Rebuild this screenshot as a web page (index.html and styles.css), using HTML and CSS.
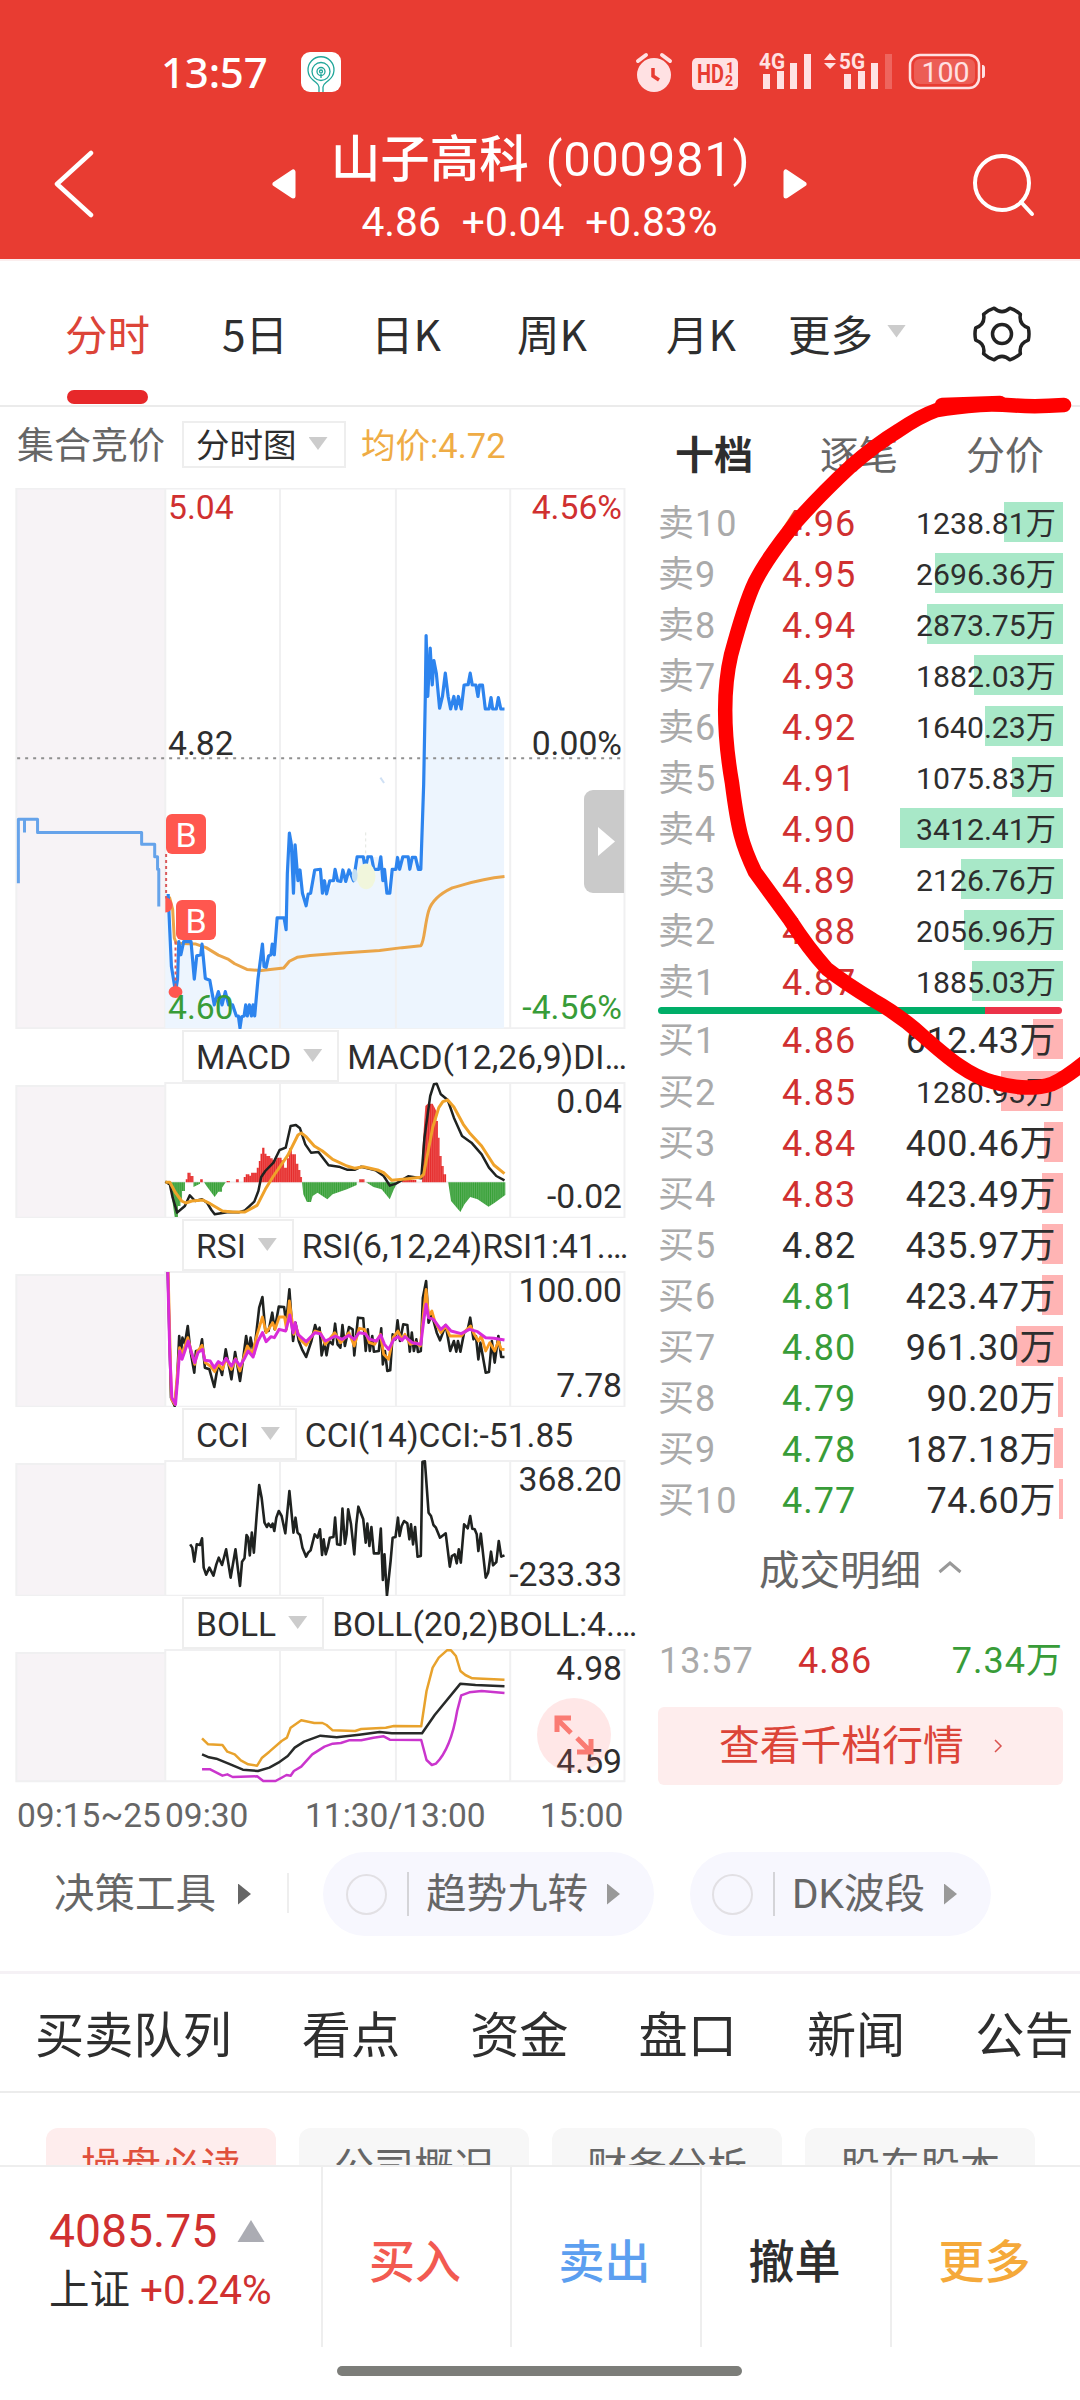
FILE: index.html
```html
<!DOCTYPE html>
<html lang="zh-CN">
<head>
<meta charset="utf-8">
<title>山子高科 (000981)</title>
<link rel="stylesheet" href="styles.css">
</head>
<body>
<div class="screen">
  <header class="header">
    <div class="status">
      <span class="clock">13:57</span>
      <svg class="app-icon" viewBox="0 0 40 40"><rect width="40" height="40" rx="9" fill="#fff"/><g fill="none" stroke="#20a69a" stroke-width="1.3"><path d="M18 40v-5c0-3-3-4-6-7A13 13 0 1 1 28 28c-3 3-6 4-6 7v5"/><circle cx="20" cy="19.500" r="9"/><circle cx="20" cy="19.500" r="4"/><circle cx="20" cy="19.500" r="1.500"/><path d="M20 22v4"/></g></svg>
      <svg class="status-icons" viewBox="0 0 370 64" fill="#ffe1e3">
        <circle cx="29" cy="35" r="17"/><path d="M13 21l8-6M45 21l-8-6" stroke="#ffe1e3" stroke-width="4" stroke-linecap="round"/><path d="M28 28v8l6 4" fill="none" stroke="#e83c32" stroke-width="3.500"/>
        <rect x="67" y="18" width="46" height="32" rx="5"/>
        <g class="st-bold"><text x="72" y="43" font-size="25" fill="#e83c32" textLength="27" lengthAdjust="spacingAndGlyphs">HD</text><text x="101" y="33" font-size="14" fill="#e83c32">1</text><text x="100" y="46" font-size="14" fill="#e83c32">2</text>
        <text x="134" y="28.500" font-size="22.500" textLength="26" lengthAdjust="spacingAndGlyphs">4G</text><text x="214" y="28.500" font-size="22.500" textLength="26" lengthAdjust="spacingAndGlyphs">5G</text></g>
        <path d="M138 34h7v15h-7zM152 31h7v18h-7zM165 23h7v26h-7zM179 14h7v35h-7zM219 34h7v15h-7zM233 31h7v18h-7zM246 23h7v26h-7z"/><path d="M260 14h7v35h-7z" opacity=".25"/>
        <path d="M199 20l6-7 6 7zM199 23h12l-6 6z"/>
        <rect x="285" y="15" width="69" height="33" rx="10" fill="none" stroke="#ffe1e3" stroke-width="2.500"/><rect x="289" y="19" width="61" height="25" rx="6" opacity=".2"/><path d="M357 25c3 0 3 2 3 4v5c0 2 0 4-3 4z"/>
        <text x="296.500" y="42" font-size="28.500" textLength="48">100</text>
      </svg>
    </div>
    <div class="title-row">
      <svg class="back" viewBox="0 0 42 68"><path d="M38 3L4 34l34 31" fill="none" stroke="#fff" stroke-width="4.500" stroke-linecap="round" stroke-linejoin="round"/></svg>
      <svg class="arrow arrow-left" viewBox="0 0 24 30"><path d="M21 3v24L3 15z" fill="#fff" stroke="#fff" stroke-width="5" stroke-linejoin="round"/></svg>
      <div class="title">
        <h1><span class="name">山子高科</span><span class="code">(000981)</span></h1>
        <p><span>4.86</span><span>+0.04</span><span>+0.83%</span></p>
      </div>
      <svg class="arrow arrow-right" viewBox="0 0 24 30"><path d="M3 3v24l18-12z" fill="#fff" stroke="#fff" stroke-width="5" stroke-linejoin="round"/></svg>
      <svg class="search" viewBox="0 0 64 64" fill="none" stroke="#fff" stroke-width="4"><circle cx="31" cy="30" r="27"/><path d="M50 49l11 12" stroke-linecap="round"/></svg>
    </div>
  </header>

  <nav class="tabs">
    <span class="tab active">分时</span><span class="tab">5日</span><span class="tab">日K</span><span class="tab">周K</span><span class="tab">月K</span>
    <span class="tab more">更多<i class="tri"></i></span>
    <svg class="gear" viewBox="-30 -30 60 60" fill="none" stroke="#222" stroke-width="3.500" stroke-linejoin="round"><path d="M26.300-6.100A27 27 0 0 1 26.300 6.100Q16.500 9.500 18.400 19.700A27 27 0 0 1 7.900 25.800Q0 19-7.900 25.800A27 27 0 0 1-18.400 19.700Q-16.500 9.500-26.300 6.100A27 27 0 0 1-26.300-6.100Q-16.500-9.500-18.400-19.700A27 27 0 0 1-7.900-25.800Q0-19 7.900-25.800A27 27 0 0 1 18.400-19.700Q16.500-9.500 26.300-6.100Z"/><circle r="9.500"/></svg>
  </nav>

  <main class="main">
    <section class="charts">
      <div class="chart-head top">
        <span class="auction">集合竞价</span><span class="select cjk">分时图<i class="tri"></i></span><span class="avg">均价:4.72</span>
      </div>
      <div class="panel price">
        <svg viewBox="0 22.400 1568 1512" preserveAspectRatio="none" class="plot">
          <rect x="40" y="23" width="365" height="1510" fill="#f7f3f6"/>
          <path class="grid" d="M40 24H1530V1532H40ZM405 22V1532M686 22V1532M970 22V1532M1250 22V1532"/>
          <path d="M405 1532V1160H412L422 1390 430 1430 437 1290 443 1320 450 1290 468 1290 476 1395 482 1330 495 1297 503 1390 515 1400 525 1465 535 1432 545 1465 553 1432 570 1465 588 1530 600 1465 622 1500 632 1390 643 1295 652 1362 665 1297 672 1325 682 1224 697 1224 701 1255 709 985 723 1020 730 1090 750 1190 772 1090 800 1155 840 1090 866 1120 880 1053 905 1053 935 1055 950 1155 962 1090 990 1053 1020 1053 1031 1088 1044 435 1052 470 1078 638 1091 540 1104 640 1130 610 1137 573 1152 540 1165 573 1188 638 1235 640V1532Z" fill="#edf5fe"/>
          <path class="grid" d="M686 1100V1532M970 1050V1532"/>
          <path d="M42 778H1530" class="line" stroke="#909090" stroke-width="2" stroke-dasharray="3 5"/>
          <path class="line" stroke="#66a3ea" stroke-width="3" d="M45 1127V948H60V985M60 948H92V985H347V1018H379V1053H386V1088H389V1192"/>
          <path class="line" stroke="#eaa549" stroke-width="3" d="M415 1165L423 1200 427 1280 432 1295 480 1297 505 1307 535 1328 560 1340 575 1352 605 1368 640 1371 695 1364 709 1345 728 1334 760 1329 830 1323 930 1315 985 1307 1031 1302C1040 1290 1040 1245 1050 1205 1057 1177 1080 1155 1108 1140 1150 1127 1170 1116 1236 1108"/>
          <path class="line" stroke="#2d84ee" stroke-width="3.200" stroke-linejoin="bevel" d="M412 1157L416 1260 420 1360 430 1430 435 1395 438 1290 443 1327 450 1290H468L476 1395 482 1330 492 1327 495 1297 503 1393 514 1398 519 1430 525 1467 535 1430 544 1467 552 1430 560 1467 570 1467 579 1498 584 1498 588 1532 592 1500 598 1498 602 1467 606 1498 611 1467 616 1498 620 1467 624 1498 632 1395 643 1297 647 1360 652 1362 658 1330 664 1327 667 1297 672 1327 679 1224 696 1224 701 1257 704 1100 709 987 714 1020 719 1155 723 1020 730 1120 735 1090 741 1155 750 1190 755 1157 761 1155 771 1090 785 1088 790 1155 795 1120 800 1157 808 1120 817 1120 821 1088 827 1120 835 1122 840 1090 847 1122 855 1090 866 1120 875 1053 890 1053 895 1088 901 1053 910 1053 916 1088 928 1088 933 1053 938 1120 942 1088 948 1155 955 1155 961 1088 970 1088 974 1055 979 1088 987 1053 1000 1053 1004 1088 1010 1055 1018 1055 1025 1088 1031 1088 1038 850 1042 605 1044 435 1048 605 1054 470 1059 573 1063 505 1069 540 1077 638 1084 605 1091 540 1098 605 1104 640 1112 605 1117 640 1123 605 1130 640 1137 573 1147 572 1152 540 1157 573 1166 573 1171 605 1175 573 1182 573 1189 640 1198 640 1203 608 1207 640 1216 640 1221 608 1227 640H1236"/>
          <ellipse cx="897" cy="1108" rx="23" ry="36" fill="#f1f6dc"/><ellipse cx="869" cy="1105" rx="7" ry="18" fill="#c3dff4"/><path class="line" stroke="#e1e5df" stroke-dasharray="3 3" d="M896 985V1060"/><path class="line" stroke="#cfe0f4" stroke-width="2" d="M932 832l9 15"/>
          <path class="line" stroke="#d95a5c" stroke-width="2" stroke-dasharray="3 3" d="M407 1045V1170M430 1290V1420"/>
          <path d="M405 1167a18 21 0 0 1 0 42z" fill="#ff574f"/><ellipse cx="430" cy="1431" rx="17" ry="17" fill="#ff574f"/>
        </svg>
        <b class="mark mark-a">B</b><b class="mark mark-b">B</b>
        <span class="lab l up" style="top:1px">5.04</span><span class="lab r up" style="top:1px">4.56%</span>
        <span class="lab l" style="top:237px">4.82</span><span class="lab r" style="top:237px">0.00%</span>
        <span class="lab l down" style="top:501px">4.60</span><span class="lab r down" style="top:501px">-4.56%</span>
        <span class="drawer"><i></i></span>
      </div>

      <div class="chart-head"><span class="select">MACD<i class="tri"></i></span><span class="ind">MACD(12,26,9)DI…</span></div>
      <div class="panel">
        <svg viewBox="0 183 1568 408" preserveAspectRatio="none" class="plot">
          <defs><pattern id="rs" width="4.600" height="20" patternUnits="userSpaceOnUse"><path d="M0 0h4.600v20H0z" fill="#f58482"/><path d="M0 0h3.600v20H0z" fill="#e52b2b"/></pattern>
          <pattern id="gs" width="4.600" height="20" patternUnits="userSpaceOnUse"><path d="M0 0h4.600v20H0z" fill="#8cc68c"/><path d="M0 0h3.600v20H0z" fill="#36a036"/></pattern></defs>
          <rect x="40" y="195" width="365" height="395" fill="#f7f3f6"/>
          <path class="grid" d="M405 195H40V590H1530V186H405V590M686 186V590M970 186V590M1250 186V590M405 484H1236"/>
          <path fill="url(#rs)" d="M455 484V475H459V455H467V465H474V484ZM490 484V475H497V484ZM555 484V480H563V484ZM578 484V475H585V484ZM597 484V468H602V460H611V464H615V455H629V440H634V420H638V398H642V380H648V398H653V405H662V412H668V418H677V410H690V418H696V440H703V412H708V382H715V400H725V428H731V447H736V468H740V484ZM880 484V475H893V484ZM985 484V477H1020V484ZM1034 484V400L1042 255 1048 248H1060L1069 270V300H1073V350H1077V405H1082V435H1087V460H1093V484Z"/>
          <path fill="url(#gs)" d="M412 484L420 500V520L428 588H436V555H442V540H446V510H453V484ZM474 484V498L490 488V484ZM500 484L506 495 526 528 535 512H544V500L553 484ZM740 484L743 520 752 543H762L766 525 778 515 802 535 815 520 850 505 874 492V484ZM897 484L915 498 935 505 955 535 965 505 973 487V484ZM1098 484L1105 540 1128 573 1138 550 1152 528 1170 535 1197 557 1212 545 1238 522V484Z"/>
          <path class="line" stroke="#1f2220" stroke-width="2.500" d="M405 482L416 490 423 530 434 575 453 555 465 523 478 540 495 535 507 545 518 567 526 580 560 573 585 574 600 568 623 542 633 510 640 468 650 450 670 425 685 387 700 380 712 315 725 312 735 322 748 370 762 395 780 393 805 433 830 437 850 446 870 446 885 437 920 448 940 465 955 494 970 488 1000 466 1032 472 1040 350 1054 225 1063 190 1070 188 1080 220 1097 237 1112 290 1132 345 1155 365 1180 400 1198 440 1216 465 1236 478"/>
          <path class="line" stroke="#efa22a" stroke-width="3" d="M405 484H416L430 515 445 540 455 546 470 540 497 537 515 548 545 570 570 573 600 573 630 553 650 505 670 465 705 403 730 342 738 336 750 347 770 375 790 390 815 415 850 435 870 442 890 437 925 447 940 455 960 478 1000 473 1030 469 1038 460 1060 320 1075 260 1085 242 1097 237 1112 258 1135 310 1150 335 1180 375 1210 432 1236 458"/>
        </svg>
        <span class="lab r" style="top:1px">0.04</span><span class="lab r" style="top:96px">-0.02</span>
      </div>

      <div class="chart-head"><span class="select">RSI<i class="tri"></i></span><span class="ind">RSI(6,12,24)RSI1:41.…</span></div>
      <div class="panel">
        <svg viewBox="0 750 1568 408" preserveAspectRatio="none" class="plot">
          <rect x="40" y="762" width="365" height="395" fill="#f7f3f6"/>
          <path class="grid" d="M405 762H40V1157H1530V753H405V1157M686 753V1157M970 753V1157M1250 753V1157"/>
          <path class="line" stroke="#1f2220" stroke-width="2.600" d="M411 753L419 1130 428 1155 434 1080 439 945 443 1000 447 950 453 968 460 915 466 985 476 1055 480 990 490 988 495 955 502 1040 513 1045 525 1098 535 1025 544 1062 553 985 567 1075 576 993 588 1080 595 1020 603 945 610 995 614 950 622 1000 635 860 643 828 650 930 658 930 667 875 673 925 683 857 696 858 701 905 709 805 718 960 724 905 732 960 740 985 750 1008 763 960 772 912 778 935 783 920 788 1003 795 965 800 1003 806 960 815 970 821 908 827 970 834 980 839 912 845 975 855 918 864 925 868 1003 877 890 890 892 896 990 901 925 906 990 912 945 916 992 928 990 934 922 938 1030 943 990 949 1050 956 1048 962 940 969 955 974 898 980 960 988 910 998 912 1004 992 1009 935 1014 990 1020 955 1024 993 1031 990 1036 830 1044 780 1050 905 1058 880 1070 935 1078 958 1092 912 1103 990 1112 960 1118 992 1122 960 1128 992 1137 935 1146 925 1152 890 1160 955 1166 945 1172 1015 1177 965 1190 1055 1198 1053 1205 960 1212 1025 1221 945 1228 1008 1236 1008"/>
          <path class="line" stroke="#fa9b22" stroke-width="2.800" d="M412 753L420 1135 428 1150 435 1050 440 980 446 1000 460 950 468 988 477 1030 484 990 495 973 503 1025 515 1035 526 1052 535 1030 545 1045 554 1012 567 1045 577 1013 588 1050 598 1005 606 975 618 1000 630 940 643 888 652 935 668 905 674 925 684 888 697 888 702 925 709 840 720 940 726 920 735 955 750 973 772 930 785 935 797 970 820 935 835 965 855 935 868 975 880 922 893 925 905 965 918 970 932 940 940 1000 952 1015 963 950 975 930 985 955 992 940 1005 970 1018 965 1030 975 1038 870 1044 805 1050 885 1058 870 1065 900 1080 935 1092 915 1102 945 1130 945 1140 930 1153 915 1162 940 1172 960 1179 945 1190 990 1200 965 1212 990 1221 960 1228 985H1236"/>
          <path class="line" stroke="#d92bd9" stroke-width="3" d="M411 753L416 1000 421 1130 430 1150 436 1060 440 990 446 1015 453 990 461 960 468 990 477 1025 485 995 496 985 502 1018 515 1020 525 1040 535 1022 545 1030 554 1012 567 1035 577 1015 588 1035 600 1010 608 990 620 1008 632 960 643 935 652 962 664 947 672 950 684 925 700 930 710 882 718 935 723 905 730 940 750 962 772 935 785 938 797 960 822 945 838 955 855 943 868 955 880 935 895 938 905 955 922 960 933 942 942 970 952 985 965 955 975 947 985 958 992 947 1010 965 1031 970 1038 900 1044 850 1050 890 1062 895 1080 925 1092 912 1105 930 1130 938 1150 925 1170 932 1190 950 1210 952 1225 955 1236 957"/>
        </svg>
        <span class="lab r" style="top:1px">100.00</span><span class="lab r" style="top:96px">7.78</span>
      </div>

      <div class="chart-head"><span class="select">CCI<i class="tri"></i></span><span class="ind">CCI(14)CCI:-51.85</span></div>
      <div class="panel">
        <svg viewBox="0 177 1568 408" preserveAspectRatio="none" class="plot">
          <rect x="40" y="189" width="365" height="395" fill="#f7f3f6"/>
          <path class="grid" d="M405 189H40V584H1530V180H405V584M686 180V584M970 180V584M1250 180V584"/>
          <path class="line" stroke="#1f2220" stroke-width="2.600" d="M466 430L471 440 476 482 482 430 490 432 495 412 499 500 505 521 513 500 523 524 530 490 536 470 544 492 554 445 565 530 577 445 588 555 593 482 599 472 604 402 608 410 612 463 617 395 622 455 629 340 635 252 641 290 648 365 654 378 658 368 664 378 668 368 672 390 677 350 683 330 690 345 699 397 709 270 719 395 724 350 729 395 735 402 741 440 750 467 755 455 761 448 771 400 778 410 784 385 789 462 793 415 798 460 803 440 808 410 817 408 821 350 826 430 834 432 839 323 845 428 849 400 853 325 860 370 868 460 873 370 878 317 890 355 896 425 900 368 905 435 910 378 916 457 928 457 933 383 938 537 942 460 948 584 957 480 962 410 969 408 975 350 979 405 984 375 990 360 998 367 1003 415 1007 370 1012 430 1017 378 1023 467 1031 465 1035 182 1041 181 1050 335 1056 345 1062 372 1068 380 1078 410 1092 397 1102 497 1107 465 1114 460 1119 487 1124 445 1129 485 1137 370 1146 382 1152 345 1157 383 1163 385 1168 400 1172 450 1178 398 1190 530 1196 515 1203 452 1208 493 1216 483 1222 420 1228 467 1236 463"/>
        </svg>
        <span class="lab r" style="top:1px">368.20</span><span class="lab r" style="top:96px">-233.33</span>
      </div>

      <div class="chart-head"><span class="select">BOLL<i class="tri"></i></span><span class="ind">BOLL(20,2)BOLL:4.…</span></div>
      <div class="panel">
        <svg viewBox="0 744 1568 408" preserveAspectRatio="none" class="plot">
          <rect x="40" y="756" width="365" height="385" fill="#f7f3f6"/>
          <path class="grid" d="M405 756H40V1141H1530V747H405V1141M686 747V1141M970 747V1141M1250 747V1141"/>
          <path class="line" stroke="#e8a22c" stroke-width="2.500" d="M495 1012L510 1030 545 1032 557 1052 575 1060 590 1078 608 1090 630 1094 642 1070 660 1052 690 1020 703 1010 712 980 738 958 770 966 790 966 800 972 815 988 870 990 885 984 945 980 965 975 1032 976 1045 870 1060 800 1075 770 1095 748 1105 748 1117 765 1128 810 1140 822 1157 832 1236 836"/>
          <path class="line" stroke="#282a29" stroke-width="2.500" d="M495 1060L512 1069 530 1073 560 1088 595 1106 632 1110 660 1100 682 1085 705 1065 722 1040 745 1022 785 1004 825 1009 880 1001 930 993 960 997 1034 997 1065 942 1128 848 1165 852 1236 856"/>
          <path class="line" stroke="#ca35cd" stroke-width="2.500" d="M495 1105H515L545 1124 557 1120 570 1128 630 1126 645 1140 675 1140 702 1122 712 1124 720 1110 738 1097 765 1060 795 1037 815 1028 835 1026 855 1018 885 1018 915 1010 940 1006 955 1016 1032 1017 1045 1077 1058 1092 1068 1088C1095 1055 1112 990 1120 930L1130 883 1150 874 1180 870 1236 876"/>
        </svg>
        <span class="lab r" style="top:1px">4.98</span><span class="lab r" style="top:94px">4.59</span>
        <svg class="expand" viewBox="0 0 74 74"><circle cx="37" cy="37" r="37" fill="#ff6b6b" opacity=".16"/><path d="M34 35L20 21M20 34V20h14M40 40l14 14M54 41v13H40" fill="none" stroke="#fa7b73" stroke-width="5"/></svg>
      </div>
      <div class="axis"><span>09:15~25</span><span>09:30</span><span>11:30/13:00</span><span>15:00</span></div>
    </section>

    <section class="book">
      <div class="book-tabs"><b>十档</b><span>逐笔</span><span>分价</span></div>
      <div class="rows">
        <div class="row sell"><span>卖10</span><span class="p up">4.96</span><span class="v s">1238.81万</span><i style="width:59px"></i></div>
        <div class="row sell"><span>卖9</span><span class="p up">4.95</span><span class="v s">2696.36万</span><i style="width:128px"></i></div>
        <div class="row sell"><span>卖8</span><span class="p up">4.94</span><span class="v s">2873.75万</span><i style="width:136px"></i></div>
        <div class="row sell"><span>卖7</span><span class="p up">4.93</span><span class="v s">1882.03万</span><i style="width:89px"></i></div>
        <div class="row sell"><span>卖6</span><span class="p up">4.92</span><span class="v s">1640.23万</span><i style="width:78px"></i></div>
        <div class="row sell"><span>卖5</span><span class="p up">4.91</span><span class="v s">1075.83万</span><i style="width:51px"></i></div>
        <div class="row sell"><span>卖4</span><span class="p up">4.90</span><span class="v s">3412.41万</span><i style="width:163px"></i></div>
        <div class="row sell"><span>卖3</span><span class="p up">4.89</span><span class="v s">2126.76万</span><i style="width:102px"></i></div>
        <div class="row sell"><span>卖2</span><span class="p up">4.88</span><span class="v s">2056.96万</span><i style="width:99px"></i></div>
        <div class="row sell"><span>卖1</span><span class="p up">4.87</span><span class="v s">1885.03万</span><i style="width:91px"></i></div>
      </div>
      <div class="ratio"></div>
      <div class="rows">
        <div class="row buy"><span>买1</span><span class="p up">4.86</span><span class="v">612.43万</span><i style="width:30px"></i></div>
        <div class="row buy"><span>买2</span><span class="p up">4.85</span><span class="v s">1280.93万</span><i style="width:62px"></i></div>
        <div class="row buy"><span>买3</span><span class="p up">4.84</span><span class="v">400.46万</span><i style="width:19px"></i></div>
        <div class="row buy"><span>买4</span><span class="p up">4.83</span><span class="v">423.49万</span><i style="width:21px"></i></div>
        <div class="row buy"><span>买5</span><span class="p">4.82</span><span class="v">435.97万</span><i style="width:21px"></i></div>
        <div class="row buy"><span>买6</span><span class="p down">4.81</span><span class="v">423.47万</span><i style="width:21px"></i></div>
        <div class="row buy"><span>买7</span><span class="p down">4.80</span><span class="v">961.30万</span><i style="width:47px"></i></div>
        <div class="row buy"><span>买8</span><span class="p down">4.79</span><span class="v">90.20万</span><i style="width:5px"></i></div>
        <div class="row buy"><span>买9</span><span class="p down">4.78</span><span class="v">187.18万</span><i style="width:9px"></i></div>
        <div class="row buy"><span>买10</span><span class="p down">4.77</span><span class="v">74.60万</span><i style="width:4px"></i></div>
      </div>
      <div class="detail">成交明细<svg viewBox="0 0 24 14"><path d="M1.500 12L12 3l10.500 9" fill="none" stroke="#999" stroke-width="3"/></svg></div>
      <div class="deal"><span>13:57</span><span class="up">4.86</span><span class="down">7.34万</span></div>
      <div class="depth-btn">查看千档行情<svg viewBox="0 0 10 16"><path d="M2 2l6 6-6 6" fill="none" stroke="#d9534f" stroke-width="1.500"/></svg></div>
      <svg class="stroke" viewBox="640 390 440 710" fill="none" stroke="#f00" stroke-width="14.500" stroke-linecap="round" stroke-linejoin="round"><path d="M1064 405Q1037 407 1015 405.500T980 405Q955 407 937 410 920 416 898 431 875 445 850 467 820 495 797 521 767 558 755 582 745 603 731 655C724 685 722 725 732 783 738 830 742 845 755 872L790 920Q808 948 827 969 845 983 873 1000 900 1015 923 1036C950 1060 970 1076 993 1082Q1027 1092 1052 1084 1066 1078 1090 1058"/><path d="M942 405L1000 403"/></svg>
    </section>
  </main>

  <div class="tools">
    <span class="tool-title">决策工具<i class="play"></i></span>
    <span class="pill"><i class="ring"></i><i class="bar"></i>趋势九转<i class="play"></i></span>
    <span class="pill dk"><i class="ring"></i><i class="bar"></i>DK波段<i class="play"></i></span>
  </div>
  <nav class="sections"><span>买卖队列</span><span>看点</span><span>资金</span><span>盘口</span><span>新闻</span><span>公告</span></nav>
  <div class="chips"><span class="on">操盘必读</span><span>公司概况</span><span>财务分析</span><span>股东股本</span></div>

  <footer class="bottom">
    <div class="actions">
      <div class="index"><p class="idx-val">4085.75<svg viewBox="0 0 28 22"><path d="M14 0l13.500 22H.5z" fill="#abacb3"/></svg></p><p class="idx-name">上证 <span class="up">+0.24%</span></p></div>
      <span class="act a-buy">买入</span><span class="act a-sell">卖出</span><span class="act">撤单</span><span class="act a-more">更多</span>
    </div>
    <div class="home"></div>
  </footer>
</div>
</body>
</html>
```
FILE: styles.css
```css
* { box-sizing: border-box; margin: 0; padding: 0; }
body { background: #fff; color: #2e2e2e; font-family: Roboto, "Noto Sans CJK SC", sans-serif; }
i { font-style: normal; }
svg { display: block; flex: none; }
span { white-space: nowrap; }
.up { color: #d03030 !important; }
.down { color: #389c38 !important; }
.screen { width: 1080px; height: 2400px; overflow: hidden; display: flex; flex-direction: column; background: #fff; }
.screen > * { flex: none; }

.header { height: 261px; background: #e83c32; color: #fff; border-bottom: 2px solid #fbeeee; }
.status { display: flex; height: 104px; padding-top: 40px; }
.clock { margin-left: 161px; width: 140px; font: 500 42px/63px "Noto Sans", Roboto, sans-serif; letter-spacing: -.2px; }
.app-icon { width: 40px; height: 40px; margin-top: 12px; }
.status-icons { width: 370px; height: 64px; margin-left: 284px; font-family: Roboto, sans-serif; }
.st-bold { font-weight: 700; }
.title-row { display: flex; height: 155px; }
.back { width: 42px; height: 68px; margin: 46px 0 0 53px; }
.arrow { width: 24px; height: 30px; margin-top: 65px; }
.arrow-left { margin-left: 177px; }
.title { width: 487px; text-align: center; }
.title h1 { font-size: 49.500px; font-weight: 500; line-height: 70px; margin-top: 21px; padding-left: 2px; display: flex; justify-content: center; gap: 17px; }
.title .code { font-weight: 400; font-size: 49px; letter-spacing: .7px; }
.title p { display: flex; justify-content: center; gap: 21px; font-size: 40.700px; line-height: 48px; margin-top: 3px; }
.search { width: 64px; height: 64px; margin: 49px 0 0 164px; }

.tabs { height: 146px; border-bottom: 2px solid #ebebeb; display: flex; font: 400 42.500px/144px "Noto Sans CJK SC", sans-serif; }
.tab { flex: none; width: 150px; text-align: center; position: relative; }
.tab.active { color: #dc4438; width: 149px; margin-left: 33px; }
.tab:nth-child(2) { width: 146px; }
.tab:nth-child(3) { width: 156px; }
.tab:nth-child(4) { width: 136px; }
.tab:nth-child(5) { width: 162px; }
.tab.active::after { content: ""; position: absolute; left: 34px; bottom: 1px; width: 81px; height: 14px; border-radius: 7px; background: #e7282a; }
.tab.more { width: 119px; display: flex; align-items: center; gap: 14px; margin-left: 6px; }
.tri { flex: none; width: 19px; height: 13px; background: #ccc; clip-path: polygon(0 0, 100% 0, 50% 100%); }
.more .tri { margin-top: -4px; }
.gear { width: 60px; height: 60px; margin: 43px 0 0 65px; }

.main { display: flex; height: 1433px; }
.charts { width: 640px; }
.chart-head { height: 53px; display: flex; padding: 1px 0 0 182px; gap: 9px; font-size: 33.600px; }
.select { height: 52px; border: 2px solid #eee; padding: 0 15px 0 12px; display: flex; gap: 12px; line-height: 52px; }
.select .tri { margin-top: 17px; }
.ind { line-height: 56px; margin-left: -1px; }
.chart-head.top { height: 81px; padding: 14px 0 0 17px; gap: 0; line-height: 52px; }
.auction { width: 165px; color: #666; font-size: 37px; }
.select.cjk { height: 47px; width: 164px; font-size: 33.500px; line-height: 45px; }
.select.cjk .tri { margin-top: 14px; }
.avg { color: #efac45; margin-left: 15px; font-size: 34.500px; line-height: 50px; }
.panel { position: relative; height: 136px; }
.panel.price { height: 541px; }
.plot { width: 640px; height: 100%; }
.grid { fill: none; stroke: #f0f0f1; stroke-width: 2; vector-effect: non-scaling-stroke; }
.line { fill: none; vector-effect: non-scaling-stroke; stroke-linejoin: round; }
.lab { position: absolute; font-size: 33.700px; line-height: 38px; }
.lab.l { left: 168px; }
.lab.r { right: 18px; }
.mark { position: absolute; width: 40px; height: 40px; border-radius: 6px; background: #ff574f; color: #fff; font: 400 34px/42px Roboto, sans-serif; text-align: center; }
.mark-a { left: 166px; top: 326px; }
.mark-b { left: 176px; top: 412px; }
.drawer { position: absolute; left: 584px; top: 302px; width: 40px; height: 103px; border-radius: 9px 0 0 9px; background: #cacaca; }
.drawer i { position: absolute; left: 14px; top: 37px; width: 17px; height: 29px; background: #fff; clip-path: polygon(0 0, 100% 50%, 0 100%); }
.expand { position: absolute; left: 537px; top: 49px; width: 74px; height: 74px; }
.axis { display: flex; color: #666; font-size: 33.500px; line-height: 40px; padding: 11px 0 0 17px; }
.axis span:nth-child(1) { width: 148px; }
.axis span:nth-child(2) { width: 140px; }
.axis span:nth-child(3) { width: 235px; }

.book { width: 440px; position: relative; padding: 0 17px 0 18px; }
.book-tabs { display: flex; height: 95px; padding: 16px 0 0 17px; font-size: 39px; line-height: 66px; color: #666; }
.book-tabs b { flex: none; color: #2e2e2e; width: 145px; }
.book-tabs span { flex: none; width: 146px; }
.rows { display: grid; grid-auto-rows: 51.050px; }
.row { position: relative; display: flex; height: 40px; padding-right: 7px; line-height: 44px; font-size: 36px; letter-spacing: 1px; color: #aaa; }
.row span { position: relative; z-index: 1; }
.row > span:first-child { width: 124px; }
.row .p { color: #2e2e2e; }
.row .v { margin-left: auto; color: #2e2e2e; letter-spacing: .5px; }
.row .v.s { font-size: 30.200px; letter-spacing: 0; }
.row i { position: absolute; right: 0; top: 0; height: 40px; }
.sell i { background: #a8e8c8; }
.buy i { background: #ffb4b4; }
.ratio { height: 7px; width: 404px; margin: -5px 0 5px; border-radius: 4px; background: linear-gradient(90deg, #00ae68 327px, #eb3349 327px); }
.detail { display: flex; justify-content: center; align-items: center; gap: 17px; height: 60px; margin-top: 8px; font-size: 40.500px; color: #666; }
.detail svg { width: 24px; height: 14px; margin-top: -2px; }
.deal { display: flex; height: 50px; margin-top: 38px; font-size: 36px; line-height: 50px; letter-spacing: 1px; color: #aaa; padding-left: 1px; }
.deal span:first-child { width: 139px; }
.deal span:last-child { margin-left: auto; }
.depth-btn { height: 78px; margin-top: 21px; border-radius: 6px; background: #feeded; color: #dc4438; font-size: 40.800px; line-height: 80px; display: flex; align-items: center; padding-left: 61px; gap: 29px; }
.depth-btn svg { width: 10px; height: 16px; }
.stroke { position: absolute; left: 0; top: -17px; width: 440px; height: 710px; z-index: 3; }

.tools { height: 134px; display: flex; align-items: flex-start; padding: 12px 0 0 54px; font-size: 40.500px; line-height: 87px; color: #666; border-bottom: 3px solid #f5f1f5; }
.play { flex: none; width: 13px; height: 21px; background: #999; clip-path: polygon(0 0, 100% 50%, 0 100%); }
.tool-title { height: 84px; display: flex; align-items: center; gap: 22px; width: 269px; position: relative; }
.tool-title .play { background: #666; }
.tool-title::after { content: ""; position: absolute; left: 233px; top: 21px; width: 2px; height: 40px; background: #eee; }
.pill { height: 84px; width: 331px; border-radius: 42px; background: #f7f7fe; display: flex; align-items: center; padding-left: 23px; }
.pill.dk { margin-left: 36px; width: 301px; padding-left: 22px; }
.ring { width: 41px; height: 41px; border: 2px solid #e2e0e4; border-radius: 50%; }
.bar { width: 2px; height: 44px; background: #d4d4d8; margin: 0 17px 0 20px; }
.pill .play { margin-left: 19px; }
.sections { height: 119px; display: flex; gap: 70px; padding-left: 35px; font-size: 49.200px; line-height: 124px; border-bottom: 2px solid #ececec; }
.chips { height: 72px; overflow: hidden; padding: 35px 0 0 46px; display: flex; gap: 23px; }
.chips span { width: 230px; height: 80px; border-radius: 12px; background: #f7f7f7; color: #666; font-size: 40px; line-height: 79px; text-align: center; }
.chips .on { background: #feeded; color: #e0503c; }
.bottom { height: 235px; border-top: 2px solid #eee; background: #fff; position: relative; }
.actions { display: grid; grid-template-columns: 321px 189px 190px 190px 190px; grid-template-rows: 180px; height: 180px; }
.index { padding: 35px 0 0 49px; }
.idx-val { color: #d03030; font-size: 46.300px; line-height: 58px; display: flex; align-items: center; gap: 20px; }
.idx-val svg { width: 28px; height: 22px; }
.idx-name { font-size: 40.500px; line-height: 61px; }
.act { border-left: 2px solid #eee; padding-right: 3px; text-align: center; font-size: 46px; font-weight: 500; line-height: 190px; }
.a-buy { color: #f25a51; }
.a-sell { color: #5c9ff0; }
.a-more { color: #f5a93a; }
.home { width: 405px; height: 10px; border-radius: 5px; background: #7c7d79; margin: 19px 0 0 337px; }
```
